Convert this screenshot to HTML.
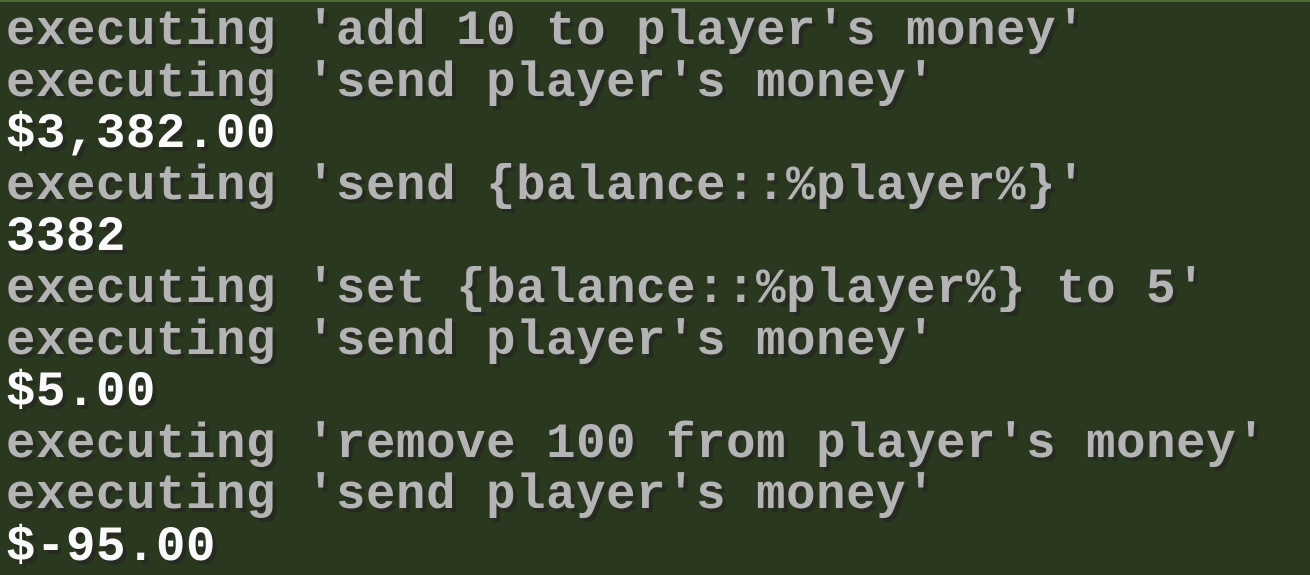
<!DOCTYPE html>
<html><head><meta charset="utf-8"><style>
html,body{margin:0;padding:0;}
body{width:1310px;height:569px;overflow:hidden;background:#2b3820;position:relative;
font-family:"Liberation Mono",monospace;font-weight:bold;}
.top{position:absolute;left:0;top:0;width:1310px;height:2px;background:#4d6b34;}
.log{position:absolute;left:6px;top:6px;font-size:49px;line-height:51.6px;letter-spacing:0.6px;white-space:pre;}
.g{color:#b4b4b4;text-shadow:4px 4px 0 #262a22;}
.w{color:#fafafa;text-shadow:4px 4px 0 #262a22;}
</style></head><body>
<div class="top"></div>
<div class="log"><div class="g">executing 'add 10 to player's money'</div><div class="g">executing 'send player's money'</div><div class="w">$3,382.00</div><div class="g">executing 'send {balance::%player%}'</div><div class="w">3382</div><div class="g">executing 'set {balance::%player%} to 5'</div><div class="g">executing 'send player's money'</div><div class="w">$5.00</div><div class="g">executing 'remove 100 from player's money'</div><div class="g">executing 'send player's money'</div><div class="w">$-95.00</div></div>
</body></html>
